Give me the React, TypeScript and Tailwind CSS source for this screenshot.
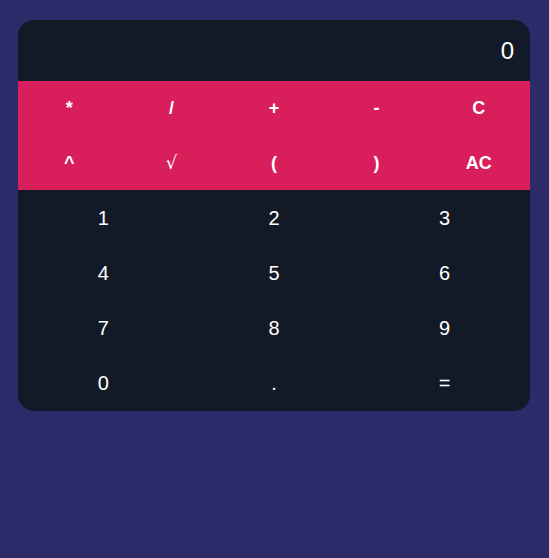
const ops = ["*", "/", "+", "-", "C", "^", "√", "(", ")", "AC"];
const nums = ["1", "2", "3", "4", "5", "6", "7", "8", "9", "0", ".", "="];

export default function App() {
  return (
    <div className="min-h-screen bg-[#2c2a69] pt-5" style={{ fontFamily: '"Liberation Sans", Arial, sans-serif' }}>
      <div className="ml-[18px] w-[512px] overflow-hidden rounded-2xl bg-[#131a27] text-white">
        <div className="flex h-[61px] items-center justify-end px-4 text-2xl">0</div>
        <div className="grid grid-cols-5 bg-[#d81f5b]">
          {ops.map((o) => (
            <button key={o} className="flex h-[54.5px] items-center justify-center text-lg font-bold">
              {o === "√" ? <span className="font-normal" style={{ fontFamily: '"DejaVu Serif", serif' }}>{o}</span> : o}
            </button>
          ))}
        </div>
        <div className="grid grid-cols-3">
          {nums.map((n) => (
            <button key={n} className="flex h-[55.25px] items-center justify-center text-xl">
              {n}
            </button>
          ))}
        </div>
      </div>
    </div>
  );
}
